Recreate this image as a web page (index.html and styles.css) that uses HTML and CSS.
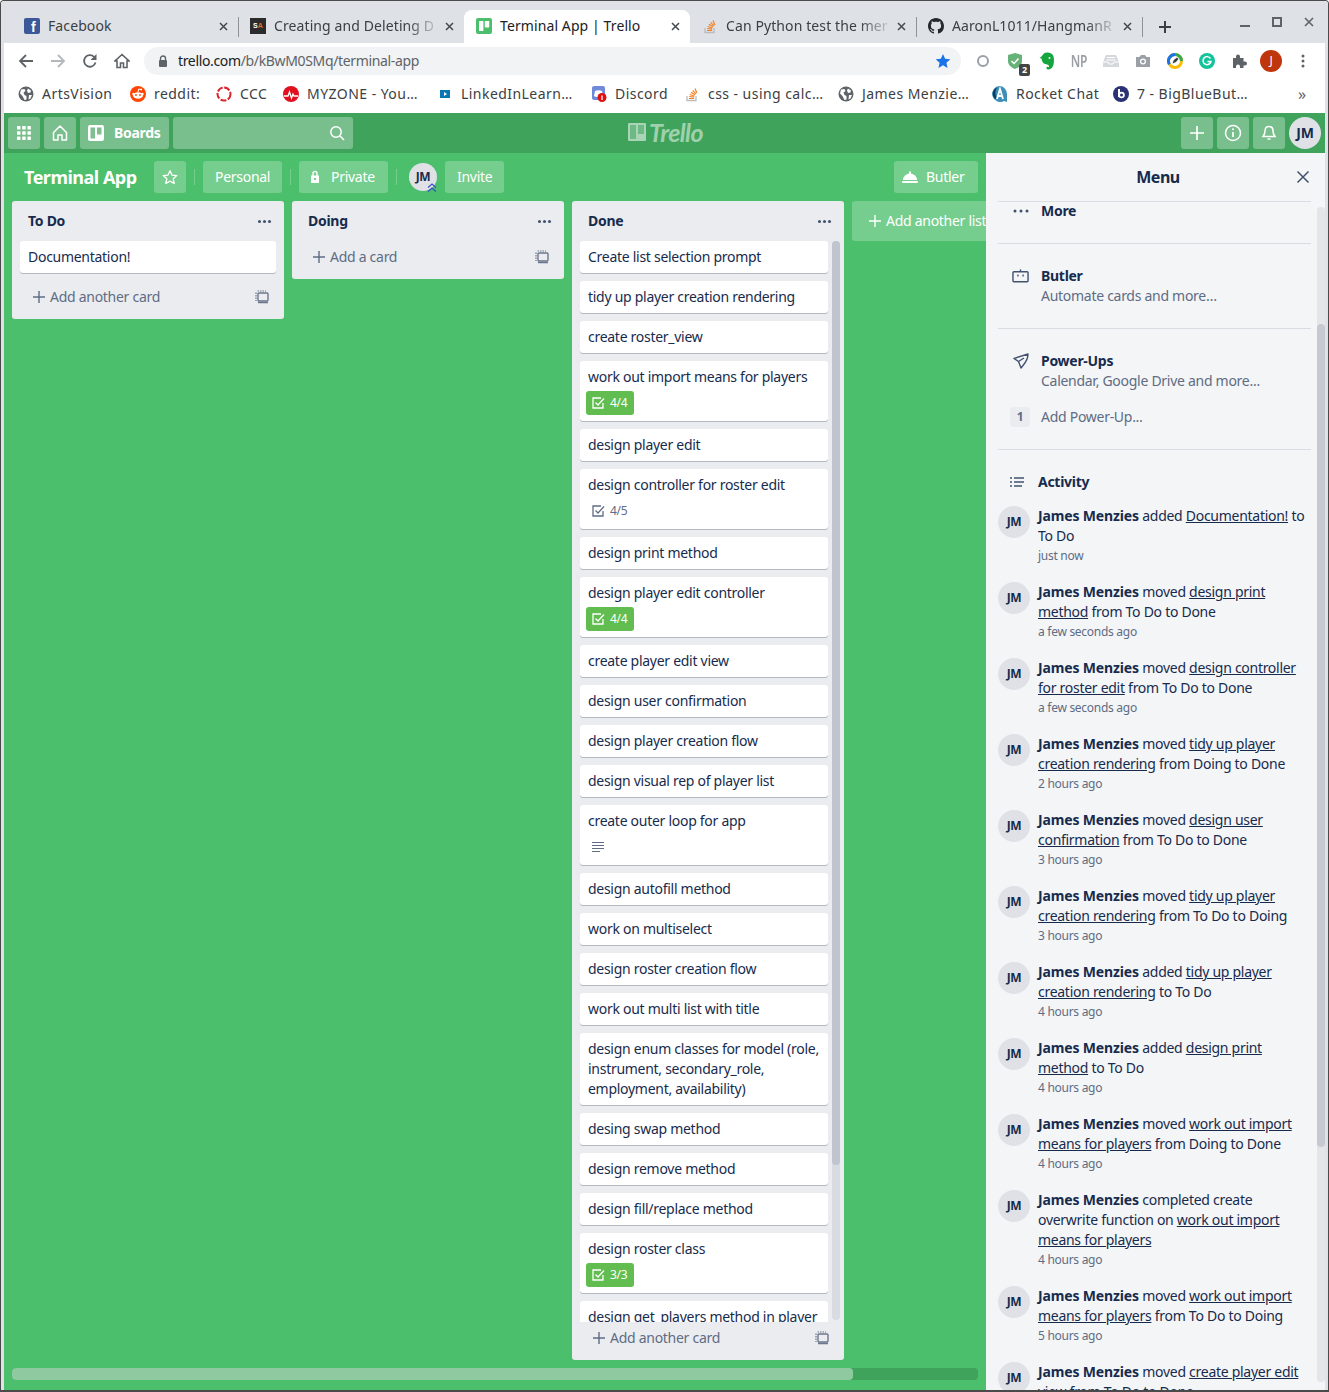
FILE: index.html
```html
<!DOCTYPE html>
<html lang="en">
<head>
    <meta charset="UTF-8">
    <title>Terminal App | Trello</title>
    <link rel="stylesheet" href="styles.css">
</head>
<body>

<div class="window">

    <!-- browser tabs -->
    <div class="tabstrip">
        <div class="tab">
            <span class="fav fav-fb">f</span>
            <span class="tab-title">Facebook</span>
            <span class="tab-x"><svg width="9" height="9" viewBox="0 0 9 9"><path d="M1 1l7 7M8 1L1 8" stroke="#45494e" stroke-width="1.500"/></svg></span>
        </div>
        <div class="tab tab-sep">
            <span class="fav fav-sa"><i>S</i>A</span>
            <span class="tab-title tab-fade">Creating and Deleting D</span>
            <span class="tab-x"><svg width="9" height="9" viewBox="0 0 9 9"><path d="M1 1l7 7M8 1L1 8" stroke="#45494e" stroke-width="1.500"/></svg></span>
        </div>
        <div class="tab tab-active">
            <span class="fav fav-trello"><svg width="16" height="16" viewBox="0 0 16 16"><rect width="16" height="16" rx="2" fill="#4bbf6b"/><rect x="3" y="3" width="4.400" height="10" rx=".6" fill="#fff"/><rect x="8.800" y="3" width="4.400" height="6.400" rx=".6" fill="#fff"/></svg></span>
            <span class="tab-title">Terminal App | Trello</span>
            <span class="tab-x"><svg width="9" height="9" viewBox="0 0 9 9"><path d="M1 1l7 7M8 1L1 8" stroke="#45494e" stroke-width="1.500"/></svg></span>
        </div>
        <div class="tab">
            <span class="fav"><svg width="16" height="16" viewBox="0 0 16 16"><path d="M3 10v4.500h9V10" fill="none" stroke="#bcbbbb" stroke-width="1.300"/><path d="M5 12.500h5M5.200 10.500l4.900.6M5.700 8.500l4.700 1.500M6.900 6.300l4.100 2.500M8.700 4.300l3.200 3.500M11 2.600l1.900 4.300" stroke="#f48024" stroke-width="1.200" fill="none"/></svg></span>
            <span class="tab-title tab-fade">Can Python test the mer</span>
            <span class="tab-x"><svg width="9" height="9" viewBox="0 0 9 9"><path d="M1 1l7 7M8 1L1 8" stroke="#45494e" stroke-width="1.500"/></svg></span>
        </div>
        <div class="tab tab-sep">
            <span class="fav"><svg width="16" height="16" viewBox="0 0 16 16"><path fill="#24292e" d="M8 0C3.580 0 0 3.580 0 8c0 3.540 2.290 6.530 5.470 7.590.4.070.55-.17.55-.38 0-.19-.01-.82-.01-1.490-2.010.37-2.530-.49-2.690-.94-.09-.23-.48-.94-.82-1.130-.28-.15-.68-.52-.01-.53.63-.01 1.080.58 1.230.82.72 1.210 1.870.87 2.330.66.07-.52.28-.87.51-1.070-1.780-.2-3.640-.89-3.640-3.950 0-.87.31-1.590.82-2.150-.08-.2-.36-1.020.08-2.120 0 0 .67-.21 2.200.82.64-.18 1.320-.27 2-.27.68 0 1.360.09 2 .27 1.530-1.040 2.200-.82 2.200-.82.44 1.100.16 1.920.08 2.120.51.56.82 1.270.82 2.150 0 3.070-1.870 3.750-3.650 3.950.29.25.54.73.54 1.480 0 1.070-.01 1.930-.01 2.200 0 .21.15.46.55.38A8.013 8.013 0 0016 8c0-4.420-3.580-8-8-8z"/></svg></span>
            <span class="tab-title tab-fade">AaronL1011/HangmanR</span>
            <span class="tab-x"><svg width="9" height="9" viewBox="0 0 9 9"><path d="M1 1l7 7M8 1L1 8" stroke="#45494e" stroke-width="1.500"/></svg></span>
        </div>
        <div class="tab-new">
            <svg width="12" height="12" viewBox="0 0 12 12"><path d="M6 0v12M0 6h12" stroke="#3c4043" stroke-width="2"/></svg>
        </div>
        <div class="win-controls">
            <svg width="10" height="10" viewBox="0 0 10 10"><path d="M0 9h10" stroke="#5f6368" stroke-width="2"/></svg>
            <svg width="10" height="10" viewBox="0 0 10 10"><rect x="1" y="1" width="8" height="8" fill="none" stroke="#5f6368" stroke-width="2"/></svg>
            <svg width="10" height="10" viewBox="0 0 10 10"><path d="M1 1l8 8M9 1l-8 8" stroke="#5f6368" stroke-width="1.600"/></svg>
        </div>
    </div>

    <!-- address bar -->
    <div class="toolbar">
        <div class="nav-buttons">
            <svg width="16" height="16" viewBox="0 0 16 16"><path d="M15 8H2M8 2L2 8l6 6" fill="none" stroke="#5f6368" stroke-width="1.800"/></svg>
            <svg width="16" height="16" viewBox="0 0 16 16"><path d="M1 8h13M8 2l6 6-6 6" fill="none" stroke="#b4b7bb" stroke-width="1.800"/></svg>
            <svg width="16" height="16" viewBox="0 0 16 16"><path d="M13.500 9.500A5.800 5.800 0 1 1 12 3.800" fill="none" stroke="#5f6368" stroke-width="1.800"/><path d="M14.500 1v6h-6z" fill="#5f6368"/></svg>
            <svg width="16" height="16" viewBox="0 0 16 16"><path d="M8 1.500L1 8h2v6.500h3.500V10h3v4.500H13V8h2z" fill="none" stroke="#5f6368" stroke-width="1.600"/></svg>
        </div>
        <div class="omnibox">
            <svg class="lock" width="10" height="13" viewBox="0 0 10 13"><path d="M2.500 5.500V3.500a2.500 2.500 0 0 1 5 0v2" fill="none" stroke="#5f6368" stroke-width="1.400"/><rect x="1" y="5" width="8" height="7" rx="1" fill="#5f6368"/></svg>
            <span class="url"><b>trello.com</b>/b/kBwM0SMq/terminal-app</span>
            <svg class="url-star" width="16" height="16" viewBox="0 0 24 24"><path d="M12 1.500l3.200 7.200 7.800.8-5.900 5.200 1.700 7.800L12 18.500l-6.800 4 1.700-7.800L1 9.500l7.800-.8z" fill="#1a73e8"/></svg>
        </div>
        <div class="ext-icons">
            <svg width="16" height="16" viewBox="0 0 16 16"><circle cx="8" cy="8" r="5" fill="none" stroke="#9aa0a6" stroke-width="2"/></svg>
            <span class="ext-shield">
                <svg width="18" height="18" viewBox="0 0 18 18"><path d="M9 1l7 2v6c0 4-3 6.500-7 8-4-1.500-7-4-7-8V3z" fill="#67b279"/><path d="M5.500 9l2.500 2.500 4.500-5" fill="none" stroke="#fff" stroke-width="1.500"/></svg>
                <span class="ext-count">2</span>
            </span>
            <svg width="16" height="18" viewBox="0 0 16 18"><path d="M3 4c1-2 3-4 6-3.500 3 .3 5.500 2 5.800 5.500.3 3 .2 6-1 8.500-1 2-3 3.200-5 3-1.500-.2-2-2.200-.5-2.700 1 0 1.500.7 1.500.7.500-.5.300-2-.7-2.700-1.500-.5-3.500-.5-4.800-1.700C3 9 2.500 7.500 2.500 6.500L.5 6z" fill="#14a63c"/><circle cx="10.500" cy="6" r="1" fill="#fff"/></svg>
            <span class="ext-np">NP</span>
            <svg width="16" height="14" viewBox="0 0 16 14"><path d="M3 1h10l3 7v5H0V8z" fill="#d5d7da"/><path d="M0 8h5l1 2h4l1-2h5M4 3.500h8M3.500 6h9" fill="none" stroke="#fff"/></svg>
            <svg width="16" height="16" viewBox="0 0 16 16"><path d="M1 4h3.500L6 2h4l1.500 2H15v10H1z" fill="#9aa0a6"/><circle cx="8" cy="8.500" r="3" fill="#fff"/><circle cx="8" cy="8.500" r="1.700" fill="#9aa0a6"/></svg>
            <svg width="16" height="16" viewBox="0 0 16 16"><circle cx="8" cy="8" r="6.500" fill="#fff" stroke="#fbbc04" stroke-width="3"/><path d="M8 1.500A6.500 6.500 0 0 0 2.400 11.300" fill="none" stroke="#1a73e8" stroke-width="3"/><path d="M8 1.500A6.500 6.500 0 0 1 14.500 8" fill="none" stroke="#34a853" stroke-width="3"/><path d="M5.500 10.500l1.300-3.500 3.200-2.500 1.500 1.500L9 9z" fill="#3c4043"/></svg>
            <svg width="16" height="16" viewBox="0 0 16 16"><circle cx="8" cy="8" r="8" fill="#15c39a"/><path d="M11.500 5.500a4 4 0 1 0 .5 3H8.500" fill="none" stroke="#fff" stroke-width="1.500"/></svg>
            <svg width="16" height="16" viewBox="0 0 16 16"><path d="M2 5h3V3.500a2 2 0 0 1 4 0V5h3.500v3.500H14a2 2 0 0 1 0 4h-1.500V15H9v-1.500a2 2 0 0 0-4 0V15H2z" fill="#5f6368"/></svg>
            <span class="ext-avatar">J</span>
            <svg width="4" height="16" viewBox="0 0 4 16"><circle cx="2" cy="3" r="1.500" fill="#5f6368"/><circle cx="2" cy="8" r="1.500" fill="#5f6368"/><circle cx="2" cy="13" r="1.500" fill="#5f6368"/></svg>
        </div>
    </div>

    <!-- bookmarks -->
    <div class="bookmarks">
        <div class="bm bm-arts"><svg width="16" height="16" viewBox="0 0 16 16"><circle cx="8" cy="8" r="7.500" fill="#5f6368"/><path d="M3 3.500l3.500-.5 1 2-2 1.500L6.500 9l2 1v3.500L6.500 14 4.500 10 2 7.500zM10 2.500l3 2-.5 2-2.500.5-1-2.500zM11 9h3l-1.500 3.500-2 1z" fill="#fff"/></svg><span>ArtsVision</span></div>
        <div class="bm bm-reddit"><svg width="16" height="16" viewBox="0 0 16 16"><circle cx="8" cy="8" r="8" fill="#ff4500"/><ellipse cx="8" cy="9.500" rx="5" ry="3.300" fill="#fff"/><circle cx="3.500" cy="8" r="1.200" fill="#fff"/><circle cx="12.500" cy="8" r="1.200" fill="#fff"/><circle cx="6" cy="9" r=".9" fill="#ff4500"/><circle cx="10" cy="9" r=".9" fill="#ff4500"/><path d="M8 6l.7-3 2.300.5" fill="none" stroke="#fff"/><circle cx="11.200" cy="3.500" r=".9" fill="#fff"/></svg><span>reddit:</span></div>
        <div class="bm bm-ccc"><svg width="16" height="16" viewBox="0 0 16 16"><circle cx="8" cy="8" r="6.500" fill="none" stroke="#e0242b" stroke-width="2" stroke-dasharray="6 1.500"/></svg><span>CCC</span></div>
        <div class="bm bm-myzone"><svg width="16" height="16" viewBox="0 0 16 16"><circle cx="8" cy="8" r="8" fill="#e0101e"/><path d="M1 10h4l1.500-4 2 6 1.500-4 1 2h4" fill="none" stroke="#fff" stroke-width="1.300"/></svg><span>MYZONE - You…</span></div>
        <div class="bm bm-long"><svg width="16" height="16" viewBox="0 0 16 16"><rect x="3" y="4" width="10" height="8" fill="#0a77b5"/><path d="M7 6l3 2-3 2z" fill="#fff"/></svg><span>LinkedInLearn…</span></div>
        <div class="bm bm-discord"><svg width="16" height="16" viewBox="0 0 16 16"><rect x="1" y="0" width="13" height="14" rx="2" fill="#7289da"/><path d="M4 5c2-1 5-1 7 0l1 5-2 1H5l-2-1z" fill="#fff"/><circle cx="11" cy="11.500" r="4.500" fill="#e01010"/><path d="M11 9.500v4.500" stroke="#fff" stroke-width="1.300"/></svg><span>Discord</span></div>
        <div class="bm bm-long"><svg width="16" height="16" viewBox="0 0 16 16"><path d="M3 10v4.500h9V10" fill="none" stroke="#bcbbbb" stroke-width="1.300"/><path d="M5 12.500h5M5.200 10.500l4.900.6M5.700 8.500l4.700 1.500M6.900 6.300l4.100 2.500M8.700 4.300l3.200 3.500M11 2.600l1.900 4.300" stroke="#f48024" stroke-width="1.200" fill="none"/></svg><span>css - using calc…</span></div>
        <div class="bm bm-long"><svg width="16" height="16" viewBox="0 0 16 16"><circle cx="8" cy="8" r="7.500" fill="#5f6368"/><path d="M3 3.500l3.500-.5 1 2-2 1.500L6.500 9l2 1v3.500L6.500 14 4.500 10 2 7.500zM10 2.500l3 2-.5 2-2.500.5-1-2.500zM11 9h3l-1.500 3.500-2 1z" fill="#fff"/></svg><span>James Menzie…</span></div>
        <div class="bm bm-rocket"><svg width="16" height="16" viewBox="0 0 16 16"><path d="M8 0a8 8 0 1 0 4 15l3 1V8a8 8 0 0 0-7-8z" fill="#3d8fb8"/><path d="M5 1.500A7 7 0 0 0 3 13l1.500-1C3 9 3 5 5 1.500z" fill="#0b3c5d"/><path d="M5 13l3-10 3 10M6.300 10h3.400" fill="none" stroke="#fff" stroke-width="1.800"/></svg><span>Rocket Chat</span></div>
        <div class="bm bm-bbb"><svg width="16" height="16" viewBox="0 0 16 16"><circle cx="8" cy="8" r="8" fill="#283274"/><path d="M6 3v8" stroke="#fff" stroke-width="2"/><circle cx="8.500" cy="9" r="2.400" fill="none" stroke="#fff" stroke-width="1.800"/></svg><span>7 - BigBlueBut…</span></div>
        <div class="bm-more">»</div>
    </div>

    <!-- trello header -->
    <div class="topbar">
        <button class="top-btn">
            <svg width="16" height="16" viewBox="0 0 16 16"><g fill="#fff"><rect x="1" y="1" width="3.500" height="3.500" rx=".6"/><rect x="6.200" y="1" width="3.500" height="3.500" rx=".6"/><rect x="11.400" y="1" width="3.500" height="3.500" rx=".6"/><rect x="1" y="6.200" width="3.500" height="3.500" rx=".6"/><rect x="6.200" y="6.200" width="3.500" height="3.500" rx=".6"/><rect x="11.400" y="6.200" width="3.500" height="3.500" rx=".6"/><rect x="1" y="11.400" width="3.500" height="3.500" rx=".6"/><rect x="6.200" y="11.400" width="3.500" height="3.500" rx=".6"/><rect x="11.400" y="11.400" width="3.500" height="3.500" rx=".6"/></g></svg>
        </button>
        <button class="top-btn">
            <svg width="18" height="18" viewBox="0 0 18 18"><path d="M9 2L2.500 8.500V16H7v-5h4v5h4.500V8.500z" fill="none" stroke="#fff" stroke-width="1.500" stroke-linejoin="round"/></svg>
        </button>
        <button class="top-btn top-boards">
            <svg width="16" height="16" viewBox="0 0 16 16"><rect width="16" height="16" rx="2" fill="#fff"/><rect x="2.500" y="2.500" width="4.500" height="11" fill="#7fbf8f"/><rect x="9" y="2.500" width="4.500" height="7" fill="#7fbf8f"/></svg>
            <span>Boards</span>
        </button>
        <div class="top-search">
            <svg width="16" height="16" viewBox="0 0 16 16"><circle cx="7" cy="7" r="5.200" fill="none" stroke="#fff" stroke-width="1.500"/><path d="M11 11l4 4" stroke="#fff" stroke-width="1.600"/></svg>
        </div>
        <div class="logo">
            <svg width="18" height="18" viewBox="0 0 18 18"><rect width="18" height="18" rx="1" fill="#fff" opacity=".55"/><rect x="2" y="2" width="6" height="14" fill="#3fa35c" opacity=".55"/><rect x="10" y="2" width="6" height="9" fill="#3fa35c" opacity=".55"/></svg>
            <span>Trello</span>
        </div>
        <div class="top-right">
            <button class="top-btn">
                <svg width="18" height="18" viewBox="0 0 18 18"><path d="M9 2v14M2 9h14" stroke="#fff" stroke-width="1.700"/></svg>
            </button>
            <button class="top-btn">
                <svg width="18" height="18" viewBox="0 0 18 18"><circle cx="9" cy="9" r="7.500" fill="none" stroke="#fff" stroke-width="1.500"/><path d="M9 8v5" stroke="#fff" stroke-width="1.700"/><circle cx="9" cy="5.300" r="1" fill="#fff"/></svg>
            </button>
            <button class="top-btn">
                <svg width="18" height="18" viewBox="0 0 18 18"><path d="M9 2.500c-2.800 0-4 2-4 4.500 0 3-1 4-2 5.500h12c-1-1.500-2-2.500-2-5.500 0-2.500-1.200-4.500-4-4.500z" fill="none" stroke="#fff" stroke-width="1.500"/><path d="M7.500 15h3" stroke="#fff" stroke-width="1.700"/></svg>
            </button>
            <span class="avatar avatar-top">JM</span>
        </div>
    </div>

    <div class="board">
        <div class="board-main">
            <div class="board-header">
                <span class="board-name">Terminal App</span>
                <button class="bh-btn bh-star">
                    <svg width="16" height="16" viewBox="0 0 24 24"><path d="M12 2.500l3 6.600 7.200.8-5.400 4.800 1.500 7.100L12 18.200l-6.300 3.600 1.500-7.100-5.400-4.800 7.200-.8z" fill="none" stroke="#fff" stroke-width="2" stroke-linejoin="round"/></svg>
                </button>
                <span class="bh-sep"></span>
                <button class="bh-btn bh-personal">Personal</button>
                <span class="bh-sep"></span>
                <button class="bh-btn bh-private">
                    <svg width="12" height="14" viewBox="0 0 12 14"><path d="M4 6V3.500a2 2 0 0 1 4 0V6" fill="none" stroke="#fff" stroke-width="1.400"/><path fill-rule="evenodd" fill="#fff" d="M2 5.500h8V13H2zM5 8v2h2V8z"/></svg>
                    Private
                </button>
                <span class="bh-sep"></span>
                <span class="avatar avatar-board">JM<svg class="admin-mark" width="10" height="10" viewBox="0 0 10 10"><path d="M1 4.500L5 1l4 3.500M1 8.500L5 5l4 3.500" fill="none" stroke="#3a50c8" stroke-width="1.200"/></svg></span>
                <button class="bh-btn bh-invite">Invite</button>
                <button class="bh-btn bh-butler">
                    <svg width="16" height="14" viewBox="0 0 16 14"><path d="M1 10a7 6.500 0 0 1 14 0z" fill="#fff"/><rect x="7" y="1.500" width="2" height="2.500" fill="#fff"/><rect x="0" y="11" width="16" height="2" rx="1" fill="#fff"/></svg>
                    Butler
                </button>
            </div>

            <div class="lists">
                <div class="list">
                    <div class="list-head"><span>To Do</span><span class="dots"><i></i><i></i><i></i></span></div>
                    <div class="list-body">
                        <div class="cards">
                            <div class="card">Documentation!</div>
                        </div>
                    </div>
                    <div class="list-foot">
                        <span class="plus"><svg width="14" height="14" viewBox="0 0 14 14"><path d="M7 1v12M1 7h12" stroke="#5e6c84" stroke-width="1.400"/></svg></span>
                        <span class="foot-text">Add another card</span>
                        <svg class="tmpl" width="14" height="14" viewBox="0 0 14 14"><path d="M2.500 1H11M1 2.500V11" fill="none" stroke="#6b778c" stroke-width="1.200" stroke-dasharray="1.500 1"/><rect x="3" y="3" width="10" height="8" rx="1" fill="none" stroke="#6b778c" stroke-width="1.400"/><path d="M3 12.500h10" stroke="#6b778c" stroke-width="1.500"/></svg>
                    </div>
                </div>

                <div class="list">
                    <div class="list-head"><span>Doing</span><span class="dots"><i></i><i></i><i></i></span></div>
                    <div class="list-foot">
                        <span class="plus"><svg width="14" height="14" viewBox="0 0 14 14"><path d="M7 1v12M1 7h12" stroke="#5e6c84" stroke-width="1.400"/></svg></span>
                        <span class="foot-text">Add a card</span>
                        <svg class="tmpl" width="14" height="14" viewBox="0 0 14 14"><path d="M2.500 1H11M1 2.500V11" fill="none" stroke="#6b778c" stroke-width="1.200" stroke-dasharray="1.500 1"/><rect x="3" y="3" width="10" height="8" rx="1" fill="none" stroke="#6b778c" stroke-width="1.400"/><path d="M3 12.500h10" stroke="#6b778c" stroke-width="1.500"/></svg>
                    </div>
                </div>

                <div class="list list-done">
                    <div class="list-head"><span>Done</span><span class="dots"><i></i><i></i><i></i></span></div>
                    <div class="list-body list-scroll">
                        <div class="cards">
                            <div class="card">Create list selection prompt</div>
                            <div class="card">tidy up player creation rendering</div>
                            <div class="card">create roster_view</div>
                            <div class="card">work out import means for players
                                <div class="badge badge-done"><svg width="14" height="14" viewBox="0 0 14 14"><path d="M12 7v5H2V2h8" fill="none" stroke="currentColor" stroke-width="1.300"/><path d="M4.500 6.500L7 9l6-6.500" fill="none" stroke="currentColor" stroke-width="1.300"/></svg>4/4</div>
                            </div>
                            <div class="card">design player edit</div>
                            <div class="card">design controller for roster edit
                                <div class="badge"><svg width="14" height="14" viewBox="0 0 14 14"><path d="M12 7v5H2V2h8" fill="none" stroke="currentColor" stroke-width="1.300"/><path d="M4.500 6.500L7 9l6-6.500" fill="none" stroke="currentColor" stroke-width="1.300"/></svg>4/5</div>
                            </div>
                            <div class="card">design print method</div>
                            <div class="card">design player edit controller
                                <div class="badge badge-done"><svg width="14" height="14" viewBox="0 0 14 14"><path d="M12 7v5H2V2h8" fill="none" stroke="currentColor" stroke-width="1.300"/><path d="M4.500 6.500L7 9l6-6.500" fill="none" stroke="currentColor" stroke-width="1.300"/></svg>4/4</div>
                            </div>
                            <div class="card">create player edit view</div>
                            <div class="card">design user confirmation</div>
                            <div class="card">design player creation flow</div>
                            <div class="card">design visual rep of player list</div>
                            <div class="card">create outer loop for app
                                <div class="badge"><svg width="14" height="14" viewBox="0 0 14 14"><path d="M1 2.500h12M1 5.500h12M1 8.500h12M1 11.500h8" stroke="currentColor" stroke-width="1.200"/></svg></div>
                            </div>
                            <div class="card">design autofill method</div>
                            <div class="card">work on multiselect</div>
                            <div class="card">design roster creation flow</div>
                            <div class="card">work out multi list with title</div>
                            <div class="card">design enum classes for model (role,<br>instrument, secondary_role,<br>employment, availability)</div>
                            <div class="card">desing swap method</div>
                            <div class="card">design remove method</div>
                            <div class="card">design fill/replace method</div>
                            <div class="card">design roster class
                                <div class="badge badge-done"><svg width="14" height="14" viewBox="0 0 14 14"><path d="M12 7v5H2V2h8" fill="none" stroke="currentColor" stroke-width="1.300"/><path d="M4.500 6.500L7 9l6-6.500" fill="none" stroke="currentColor" stroke-width="1.300"/></svg>3/3</div>
                            </div>
                            <div class="card">design get_players method in player</div>
                        </div>
                        <div class="v-scroll"><div class="v-thumb"></div></div>
                    </div>
                    <div class="list-foot">
                        <span class="plus"><svg width="14" height="14" viewBox="0 0 14 14"><path d="M7 1v12M1 7h12" stroke="#5e6c84" stroke-width="1.400"/></svg></span>
                        <span class="foot-text">Add another card</span>
                        <svg class="tmpl" width="14" height="14" viewBox="0 0 14 14"><path d="M2.500 1H11M1 2.500V11" fill="none" stroke="#6b778c" stroke-width="1.200" stroke-dasharray="1.500 1"/><rect x="3" y="3" width="10" height="8" rx="1" fill="none" stroke="#6b778c" stroke-width="1.400"/><path d="M3 12.500h10" stroke="#6b778c" stroke-width="1.500"/></svg>
                    </div>
                </div>

                <div class="add-list">
                    <svg width="14" height="14" viewBox="0 0 14 14"><path d="M7 1v12M1 7h12" stroke="#fff" stroke-width="1.400"/></svg>
                    <span>Add another list</span>
                </div>
            </div>

            <div class="h-scroll"><div class="h-thumb"></div></div>
        </div>

        <!-- right hand menu -->
        <div class="menu">
            <div class="menu-head">
                <span class="menu-title">Menu</span>
                <svg class="menu-close" width="14" height="14" viewBox="0 0 14 14"><path d="M1.500 1.500l11 11M12.500 1.500l-11 11" stroke="#42526e" stroke-width="1.500"/></svg>
            </div>
            <div class="menu-wrap">
                <div class="menu-body">
                    <div class="menu-sec sec-more">
                        <div class="menu-row">
                            <span class="menu-ico"><svg width="16" height="4" viewBox="0 0 16 4"><circle cx="2" cy="2" r="1.500" fill="#42526e"/><circle cx="8" cy="2" r="1.500" fill="#42526e"/><circle cx="14" cy="2" r="1.500" fill="#42526e"/></svg></span>
                            <b>More</b>
                        </div>
                    </div>
                    <div class="menu-sec">
                        <div class="menu-row">
                            <span class="menu-ico"><svg width="18" height="14" viewBox="0 0 18 14"><rect x="1" y="2.500" width="16" height="10.500" rx="1" fill="none" stroke="#42526e" stroke-width="1.500"/><path d="M9 0v2.500" stroke="#42526e" stroke-width="1.500"/><rect x="5.500" y="5.500" width="1.500" height="2" fill="#42526e"/><rect x="11" y="5.500" width="1.500" height="2" fill="#42526e"/></svg></span>
                            <b>Butler</b>
                        </div>
                        <div class="menu-sub">Automate cards and more…</div>
                    </div>
                    <div class="menu-sec">
                        <div class="menu-row">
                            <span class="menu-ico"><svg width="16" height="16" viewBox="0 0 16 16"><path d="M15 1L1 5.500l4.500 3L8 15l2-2.500C13 9 15 5 15 1zM5.500 8.500L11 5" fill="none" stroke="#42526e" stroke-width="1.400" stroke-linejoin="round"/></svg></span>
                            <b>Power-Ups</b>
                        </div>
                        <div class="menu-sub">Calendar, Google Drive and more...</div>
                        <div class="menu-add">
                            <span class="count">1</span>
                            <span>Add Power-Up...</span>
                        </div>
                    </div>
                    <div class="activity-head">
                        <span class="menu-ico"><svg width="14" height="12" viewBox="0 0 14 12"><path d="M0 2h2M4 2h10M0 6h2M4 6h10M0 10h2M4 10h8" stroke="#42526e" stroke-width="1.500"/></svg></span>
                        <b>Activity</b>
                    </div>
                    <div class="act">
                        <span class="avatar">JM</span>
                        <div class="act-text"><b>James Menzies</b> added <u>Documentation!</u> to<br>To Do<div class="act-time">just now</div></div>
                    </div>
                    <div class="act">
                        <span class="avatar">JM</span>
                        <div class="act-text"><b>James Menzies</b> moved <u>design print</u><br><u>method</u> from To Do to Done<div class="act-time">a few seconds ago</div></div>
                    </div>
                    <div class="act">
                        <span class="avatar">JM</span>
                        <div class="act-text"><b>James Menzies</b> moved <u>design controller</u><br><u>for roster edit</u> from To Do to Done<div class="act-time">a few seconds ago</div></div>
                    </div>
                    <div class="act">
                        <span class="avatar">JM</span>
                        <div class="act-text"><b>James Menzies</b> moved <u>tidy up player</u><br><u>creation rendering</u> from Doing to Done<div class="act-time">2 hours ago</div></div>
                    </div>
                    <div class="act">
                        <span class="avatar">JM</span>
                        <div class="act-text"><b>James Menzies</b> moved <u>design user</u><br><u>confirmation</u> from To Do to Done<div class="act-time">3 hours ago</div></div>
                    </div>
                    <div class="act">
                        <span class="avatar">JM</span>
                        <div class="act-text"><b>James Menzies</b> moved <u>tidy up player</u><br><u>creation rendering</u> from To Do to Doing<div class="act-time">3 hours ago</div></div>
                    </div>
                    <div class="act">
                        <span class="avatar">JM</span>
                        <div class="act-text"><b>James Menzies</b> added <u>tidy up player</u><br><u>creation rendering</u> to To Do<div class="act-time">4 hours ago</div></div>
                    </div>
                    <div class="act">
                        <span class="avatar">JM</span>
                        <div class="act-text"><b>James Menzies</b> added <u>design print</u><br><u>method</u> to To Do<div class="act-time">4 hours ago</div></div>
                    </div>
                    <div class="act">
                        <span class="avatar">JM</span>
                        <div class="act-text"><b>James Menzies</b> moved <u>work out import</u><br><u>means for players</u> from Doing to Done<div class="act-time">4 hours ago</div></div>
                    </div>
                    <div class="act">
                        <span class="avatar">JM</span>
                        <div class="act-text"><b>James Menzies</b> completed create<br>overwrite function on <u>work out import</u><br><u>means for players</u><div class="act-time">4 hours ago</div></div>
                    </div>
                    <div class="act">
                        <span class="avatar">JM</span>
                        <div class="act-text"><b>James Menzies</b> moved <u>work out import</u><br><u>means for players</u> from To Do to Doing<div class="act-time">5 hours ago</div></div>
                    </div>
                    <div class="act">
                        <span class="avatar">JM</span>
                        <div class="act-text"><b>James Menzies</b> moved <u>create player edit</u><br><u>view</u> from To Do to Done<div class="act-time">5 hours ago</div></div>
                    </div>
                </div>
                <div class="menu-scroll"><div class="menu-thumb"></div></div>
            </div>
        </div>
    </div>
</div>

</body>
</html>
```

FILE: styles.css
```css
* {
    box-sizing: border-box;
}

html, body {
    margin: 0;
    height: 100%;
}

body {
    font-family: "Noto Sans", sans-serif;
    font-size: 14px;
    line-height: 20px;
    letter-spacing: -.28px;
    color: #172b4d;
    overflow: hidden;
}

button {
    font: inherit;
    letter-spacing: inherit;
    border: none;
    color: #fff;
    cursor: pointer;
}

.window {
    width: 1329px;
    height: 1392px;
    display: flex;
    flex-direction: column;
    background: #dee1e6;
    border: 1px solid #4a4a4a;
    border-bottom-width: 2px;
    border-radius: 4px 4px 0 0;
    overflow: hidden;
}

/* browser chrome */
.tabstrip {
    height: 42px;
    flex: none;
    background: #dee1e6;
    display: flex;
    align-items: flex-end;
    padding-left: 11px;
    letter-spacing: .1px;
    color: #3c4043;
}

.tab {
    width: 226px;
    height: 33px;
    display: flex;
    align-items: center;
    padding: 0 7px 1px 12px;
    position: relative;
    border-radius: 8px 8px 0 0;
    flex: none;
}

.tab-sep::before,
.tab-new::before {
    content: "";
    position: absolute;
    left: 0;
    top: 7px;
    width: 1px;
    height: 20px;
    background: #8f9296;
}

.tab-active {
    background: #fff;
    color: #202124;
}

.tab-title {
    flex: 1;
    min-width: 0;
    margin-left: 8px;
    white-space: nowrap;
    overflow: hidden;
}

.tab-fade {
    -webkit-mask-image: linear-gradient(to right, #000 80%, transparent 100%);
    mask-image: linear-gradient(to right, #000 80%, transparent 100%);
}

.tab-x {
    width: 16px;
    height: 16px;
    flex: none;
    display: flex;
    align-items: center;
    justify-content: center;
}

.fav {
    width: 16px;
    height: 16px;
    flex: none;
    display: flex;
    align-items: center;
    justify-content: center;
}

.fav-fb {
    background: #3b5998;
    color: #fff;
    font: bold 14px/16px "Liberation Sans", sans-serif;
    border-radius: 2px;
    padding: 2px 0 0 3px;
}

.fav-sa {
    background: #2b2b2b;
    color: #e66a2c;
    font: bold 7px/16px "Liberation Sans", sans-serif;
}

.fav-sa i {
    color: #fff;
    font-style: normal;
}

.tab-new {
    width: 46px;
    height: 33px;
    display: flex;
    align-items: center;
    justify-content: center;
    flex: none;
    position: relative;
}

.win-controls {
    margin-left: auto;
    display: flex;
    gap: 22px;
    padding-right: 14px;
    height: 42px;
    align-items: center;
}

.toolbar {
    height: 34px;
    flex: none;
    background: #fff;
    margin: 0 3px;
    display: flex;
    align-items: center;
    padding-top: 2px;
}

.nav-buttons {
    display: flex;
    gap: 16px;
    padding-left: 14px;
    width: 140px;
    flex: none;
}

.omnibox {
    width: 817px;
    height: 28px;
    border-radius: 14px;
    background: #f1f3f4;
    display: flex;
    align-items: center;
    padding: 0 10px 0 14px;
    color: #5f6368;
    letter-spacing: -.35px;
    flex: none;
}

.url {
    margin-left: 10px;
    flex: 1;
}

.url b {
    font-weight: 400;
    color: #202124;
}

.ext-icons {
    flex: 1;
    padding-left: 6px;
    display: grid;
    grid-template-columns: repeat(11, 32px);
    justify-items: center;
    align-items: center;
}

.ext-shield {
    position: relative;
    display: flex;
}

.ext-count {
    position: absolute;
    right: -6px;
    bottom: -6px;
    width: 11px;
    height: 12px;
    background: #444;
    color: #fff;
    font-size: 9px;
    font-weight: 700;
    line-height: 12px;
    text-align: center;
    border-radius: 2px;
}

.ext-np {
    font-size: 16px;
    color: #9aa0a6;
    transform: scaleX(.75);
    font-weight: 600;
}

.ext-avatar {
    width: 22px;
    height: 22px;
    border-radius: 50%;
    background: #bf360c;
    color: #fff;
    font-size: 12px;
    line-height: 22px;
    text-align: center;
}

.bookmarks {
    height: 36px;
    flex: none;
    background: #fff;
    margin: 0 3px;
    display: flex;
    align-items: center;
    padding: 0 0 2px 14px;
    letter-spacing: .45px;
    color: #3c4043;
}

.bm {
    display: flex;
    align-items: center;
    gap: 8px;
    white-space: nowrap;
    flex: none;
}

.bm-arts { width: 112px; }
.bm-reddit { width: 86px; }
.bm-ccc { width: 67px; }
.bm-myzone { width: 154px; }
.bm-long { width: 154px; }
.bm-discord { width: 93px; }
.bm-rocket { width: 121px; }
.bm-bbb { width: 170px; }

.bm-more {
    font-size: 16px;
    color: #5f6368;
    margin-left: 15px;
}

/* trello top bar */
.topbar {
    height: 40px;
    flex: none;
    background: #3fa35c;
    margin: 0 3px;
    display: flex;
    align-items: center;
    padding: 0 4px;
    gap: 4px;
    position: relative;
}

.top-btn {
    width: 32px;
    height: 32px;
    border-radius: 3px;
    background: rgba(255, 255, 255, .3);
    display: flex;
    align-items: center;
    justify-content: center;
    padding: 0;
    flex: none;
}

.top-boards {
    width: 89px;
    justify-content: flex-start;
    padding-left: 8px;
    gap: 10px;
    font-weight: 700;
}

.top-search {
    width: 180px;
    height: 32px;
    border-radius: 3px;
    background: rgba(255, 255, 255, .3);
    display: flex;
    align-items: center;
    justify-content: flex-end;
    padding-right: 8px;
}

.logo {
    position: absolute;
    left: 624px;
    top: 7px;
    display: flex;
    align-items: center;
    gap: 3px;
    color: rgba(255, 255, 255, .5);
    font: italic 700 25px/24px "Lato", sans-serif;
    letter-spacing: -.6px;
}

.top-right {
    margin-left: auto;
    display: flex;
    gap: 4px;
    align-items: center;
}

.avatar {
    width: 32px;
    height: 32px;
    border-radius: 50%;
    background: #dfe1e6;
    color: #172b4d;
    font-size: 12px;
    font-weight: 700;
    line-height: 32px;
    text-align: center;
    flex: none;
    position: relative;
}

.avatar-top {
    font-size: 14px;
}

/* board */
.board {
    flex: 1;
    min-height: 0;
    display: flex;
    margin: 0 3px;
    background: #4bbf6b;
}

.board-main {
    width: 982px;
    flex: none;
    display: flex;
    flex-direction: column;
    min-width: 0;
    overflow: hidden;
}

.board-header {
    height: 48px;
    flex: none;
    display: flex;
    align-items: center;
    padding-left: 20px;
    color: #fff;
}

.board-name {
    font-size: 18px;
    font-weight: 700;
    letter-spacing: -.5px;
    width: 130px;
    flex: none;
}

.bh-btn {
    height: 32px;
    padding: 0 12px;
    border-radius: 3px;
    background: rgba(255, 255, 255, .24);
    display: flex;
    align-items: center;
    gap: 8px;
    flex: none;
}

.bh-star {
    width: 32px;
    padding: 0;
    justify-content: center;
}

.bh-sep {
    width: 1px;
    height: 16px;
    margin: 0 8px;
    background: rgba(255, 255, 255, .24);
    flex: none;
}

.bh-personal {
    width: 79px;
}

.bh-private {
    width: 89px;
    gap: 10px;
    padding-left: 10px;
}

.bh-invite {
    width: 59px;
}

.avatar-board {
    width: 28px;
    height: 28px;
    line-height: 28px;
    margin: 0 8px 0 4px;
}

.admin-mark {
    position: absolute;
    right: 0;
    bottom: -2px;
}

.bh-butler {
    margin-left: auto;
    margin-right: 8px;
    width: 84px;
    padding: 0 0 0 8px;
}

.lists {
    flex: 1;
    min-height: 0;
    display: flex;
    align-items: flex-start;
    gap: 8px;
    padding-left: 8px;
}

.list {
    width: 272px;
    flex: none;
    max-height: 100%;
    background: #ebecf0;
    border-radius: 3px;
    display: flex;
    flex-direction: column;
}

.list-done {
    height: 100%;
}

.list-head {
    height: 40px;
    flex: none;
    display: flex;
    align-items: center;
    justify-content: space-between;
    padding: 0 13px 0 16px;
    font-weight: 700;
}

.dots {
    display: flex;
    gap: 2px;
}

.dots i {
    width: 3px;
    height: 3px;
    border-radius: 50%;
    background: #42526e;
}

.list-body {
    display: flex;
    padding: 0 8px;
    min-height: 0;
}

.list-scroll {
    flex: 1;
    overflow: hidden;
    padding-right: 4px;
}

.cards {
    flex: 1;
    min-width: 0;
    overflow: hidden;
}

.card {
    background: #fff;
    border-radius: 3px;
    box-shadow: 0 1px 0 rgba(9, 30, 66, .25);
    padding: 6px 8px;
    margin-bottom: 8px;
    white-space: nowrap;
}

.badge {
    height: 24px;
    width: 48px;
    margin: 4px 0 0 -2px;
    padding-left: 5px;
    border-radius: 3px;
    display: flex;
    align-items: center;
    gap: 5px;
    font-size: 12px;
    color: #5e6c84;
}

.badge-done {
    background: #61bd4f;
    color: #fff;
}

.v-scroll {
    width: 8px;
    margin-left: 4px;
    border-radius: 4px;
    background: #d9dbe3;
    margin-bottom: 2px;
    flex: none;
}

.v-thumb {
    height: 924px;
    border-radius: 4px;
    background: #bfc4ce;
}

.list-foot {
    height: 38px;
    flex: none;
    display: flex;
    align-items: center;
    padding: 0 15px 6px 20px;
    color: #5e6c84;
}

.plus {
    display: flex;
    margin-right: 4px;
}

.tmpl {
    margin-left: auto;
}

.add-list {
    width: 272px;
    height: 40px;
    flex: none;
    background: rgba(255, 255, 255, .24);
    border-radius: 3px;
    display: flex;
    align-items: center;
    gap: 4px;
    padding-left: 16px;
    color: #fff;
    white-space: nowrap;
}

.h-scroll {
    height: 12px;
    flex: none;
    margin: 8px 8px 10px;
    border-radius: 4px;
    background: #3fa35c;
}

.h-thumb {
    width: 841px;
    height: 12px;
    border-radius: 4px;
    background: #8fc9a0;
}

/* menu panel */
.menu {
    flex: 1;
    min-width: 0;
    background: #f4f5f7;
    display: flex;
    flex-direction: column;
    overflow: hidden;
}

.menu-head {
    height: 49px;
    flex: none;
    margin: 0 14px 0 12px;
    padding: 0 0 1px 7px;
    border-bottom: 1px solid #d9dce3;
    display: flex;
    align-items: center;
    justify-content: center;
    position: relative;
}

.menu-title {
    font-size: 16px;
    font-weight: 700;
    letter-spacing: -.5px;
}

.menu-close {
    position: absolute;
    right: 1px;
    top: 17px;
}

.menu-wrap {
    flex: 1;
    min-height: 0;
    display: flex;
}

.menu-body {
    flex: 1;
    min-width: 0;
    padding: 0 6px 0 12px;
    overflow: hidden;
}

.menu-sec {
    border-bottom: 1px solid #d9dce3;
    padding: 22px 0;
}

.sec-more {
    height: 43px;
    padding: 0;
}

.sec-more .menu-row {
    margin-top: -1px;
}

.menu-row {
    display: flex;
    align-items: center;
    height: 20px;
}

.menu-ico {
    width: 31px;
    padding-left: 14px;
    margin-right: 12px;
    flex: none;
    display: flex;
    align-items: center;
    justify-content: center;
}

.menu-sub {
    margin-left: 43px;
    color: #5e6c84;
}

.menu-add {
    display: flex;
    align-items: center;
    margin: 16px 0 0 12px;
    color: #5e6c84;
    gap: 11px;
}

.count {
    width: 20px;
    height: 20px;
    background: #ebecf0;
    border-radius: 3px;
    font-size: 12px;
    font-weight: 700;
    text-align: center;
}

.activity-head {
    display: flex;
    align-items: center;
    height: 20px;
    margin-top: 22px;
}

.activity-head .menu-ico {
    padding-left: 7px;
    margin-right: 9px;
}

.act {
    display: flex;
    gap: 8px;
    margin-top: 14px;
}

.act-text {
    white-space: nowrap;
    margin-bottom: 2px;
}

.act-text b {
    letter-spacing: -.15px;
}

.act-time {
    font-size: 12px;
    color: #5e6c84;
}

.menu-scroll {
    width: 8px;
    margin: 5px 0 8px;
    background: #e3e5e9;
    border-radius: 4px;
    flex: none;
}

.menu-thumb {
    height: 823px;
    margin-top: 117px;
    background: #c6c9d1;
    border-radius: 4px;
}
```
